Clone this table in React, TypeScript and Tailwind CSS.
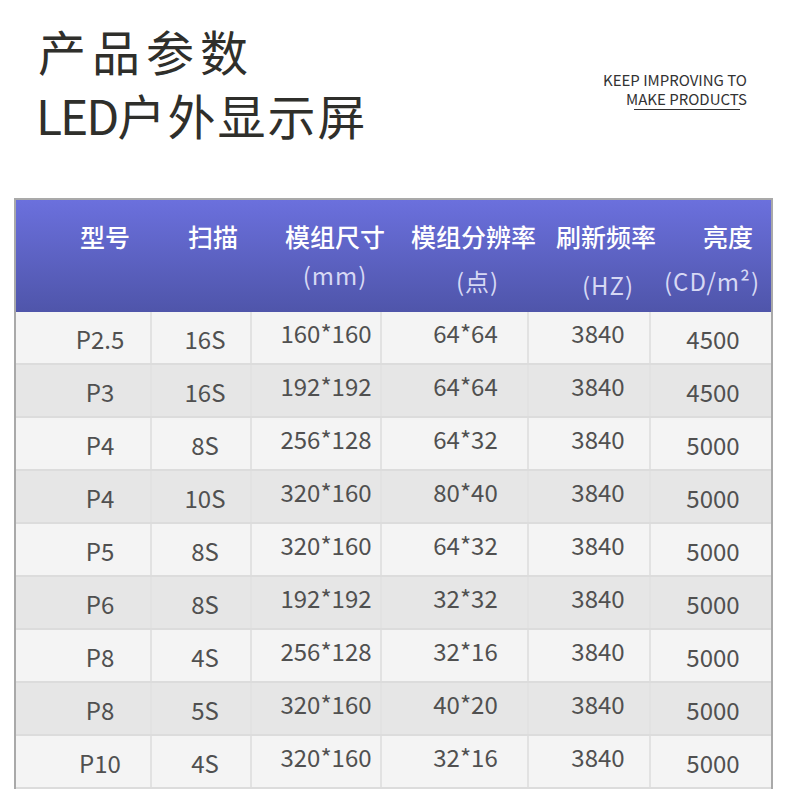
const cols = [
  { w: 'w-[134px]', body: 'pl-[34px]', head: 'pl-[44px]', up: false },
  { w: 'w-[100px]', body: 'pl-[8px]', head: 'pl-[26px]', up: false },
  { w: 'w-[130px]', body: 'pl-[20px]', head: 'pl-[40px]', up: true },
  { w: 'w-[147px]', body: 'pl-[22px]', head: 'pl-[40px]', up: true },
  { w: 'w-[122px]', body: 'pl-[18px]', head: 'pl-[36px]', up: true },
  { w: 'w-[122px]', body: 'pl-[4px]', head: 'pl-[36px]', up: false },
];

const heads = [
  { t: '型号', s: '', sub: '' },
  { t: '扫描', s: '', sub: '' },
  { t: '模组尺寸', s: '(mm)', sub: 'mt-[8px]' },
  { t: '模组分辨率', s: '(点)', sub: 'mt-[14px] ml-[8px]' },
  { t: '刷新频率', s: '(HZ)', sub: 'mt-[18px] ml-[4px]' },
  { t: '亮度', s: '(CD/m²)', sub: 'mt-[14px] mr-[32px]' },
];

const rows = [
  ['P2.5', '16S', '160*160', '64*64', '3840', '4500'],
  ['P3', '16S', '192*192', '64*64', '3840', '4500'],
  ['P4', '8S', '256*128', '64*32', '3840', '5000'],
  ['P4', '10S', '320*160', '80*40', '3840', '5000'],
  ['P5', '8S', '320*160', '64*32', '3840', '5000'],
  ['P6', '8S', '192*192', '32*32', '3840', '5000'],
  ['P8', '4S', '256*128', '32*16', '3840', '5000'],
  ['P8', '5S', '320*160', '40*20', '3840', '5000'],
  ['P10', '4S', '320*160', '32*16', '3840', '5000'],
];

const font = { fontFamily: '"Noto Sans CJK SC", "Noto Sans", sans-serif' };

export default function App() {
  return (
    <div className="min-h-screen bg-white" style={font}>
      {/* 标题 */}
      <div className="flex items-end justify-between pl-[38px] pr-[43px] pt-[18px]">
        <div className="text-[#2f2f2b]">
          <div className="text-[48px] leading-[64px] tracking-[6px]">产品参数</div>
          <div className="text-[48px] leading-[64px] tracking-[2px] -ml-[2px]">
            <span className="tracking-[-2px]">LED</span>户外显示屏
          </div>
        </div>
        <div className="flex flex-col items-end pb-[36px] text-[15px] leading-[19px] text-[#333]">
          <span>KEEP IMPROVING TO</span>
          <span>MAKE PRODUCTS</span>
          <span className="mt-px mr-[7px] block h-px w-[106px] bg-[#333]" />
        </div>
      </div>

      {/* 参数表 */}
      <div className="ml-[14px] mt-[52px] w-[759px] border-x-2 border-t-2 border-[#a9a9a9]">
        <div className="flex h-[112px] bg-linear-to-b from-[#6b70dd] to-[#4f55aa] text-white">
          {heads.map((h, i) => (
            <div key={i} className={`${cols[i].w} ${cols[i].head} flex flex-col items-center`}>
              <div className="mt-[20px] whitespace-nowrap text-[25px] leading-[32px] font-medium">{h.t}</div>
              {h.s && (
                <div className={`whitespace-nowrap text-[24px] leading-[30px] tracking-[1px] text-[#d6d8f4] ${h.sub}`}>
                  {h.s}
                </div>
              )}
            </div>
          ))}
        </div>
        {rows.map((r, ri) => (
          <div
            key={ri}
            className={`flex h-[53px] border-b-2 border-[#dcdcdc] text-[24px] text-[#505050] ${
              ri % 2 === 0 ? 'bg-[#f4f4f4]' : 'bg-[#e6e6e6]'
            }`}
          >
            {r.map((c, ci) => (
              <div
                key={ci}
                className={`${cols[ci].w} ${cols[ci].body} ${cols[ci].up ? 'pb-[10px]' : 'pt-[2px]'} flex items-center justify-center whitespace-nowrap ${
                  ci > 0 ? 'border-l-2 border-[#e2e2e2]' : ''
                }`}
              >
                {c}
              </div>
            ))}
          </div>
        ))}
      </div>
    </div>
  );
}
